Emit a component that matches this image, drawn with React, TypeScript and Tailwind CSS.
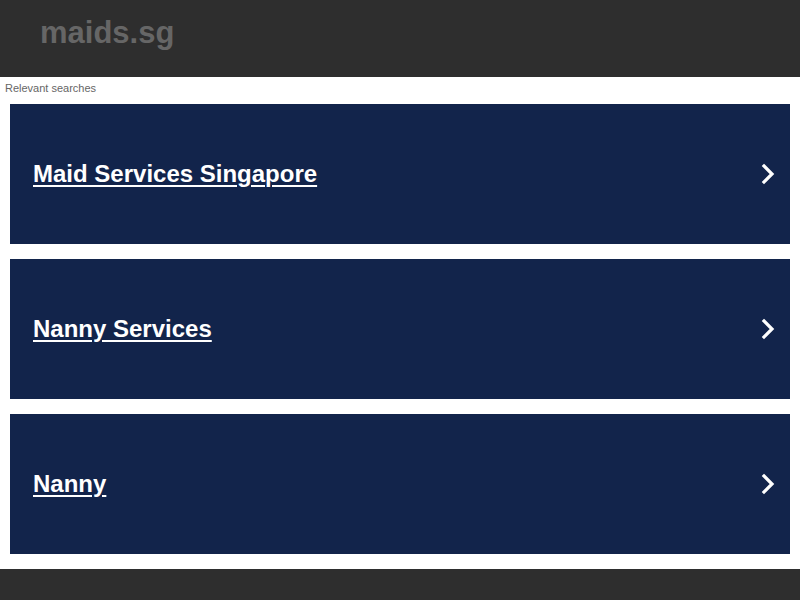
export default function App() {
  const items = ["Maid Services Singapore", "Nanny Services", "Nanny"];
  return (
    <div className="w-[800px] h-[600px] bg-white flex flex-col" style={{ fontFamily: '"Liberation Sans", Arial, sans-serif' }}>
      <div className="h-[77px] bg-[#2e2e2e] flex items-center pl-[40px] pb-[12px]">
        <span className="text-[31px] font-bold text-[#666666] leading-none">maids.sg</span>
      </div>
      <div className="h-[27px] pl-[5px] pt-[5px] text-[11px] leading-[13px] text-[#666666]">Relevant searches</div>
      <div className="flex flex-col gap-[15px] px-[10px]">
        {items.map((t) => (
          <a key={t} href="#" className="h-[140px] bg-[#12244b] flex items-center justify-between pl-[23px] pr-[13px]">
            <span className="text-[24px] font-bold text-white underline underline-offset-[3px] decoration-2">{t}</span>
            <svg width="16" height="22" viewBox="0 0 16 22" fill="none">
              <path d="M3 3 L11 11 L3 19" stroke="white" strokeWidth="3.2" strokeLinecap="square" strokeLinejoin="miter" />
            </svg>
          </a>
        ))}
      </div>
      <div className="h-[15px]" />
      <div className="flex-1 bg-[#2e2e2e]" />
    </div>
  );
}
